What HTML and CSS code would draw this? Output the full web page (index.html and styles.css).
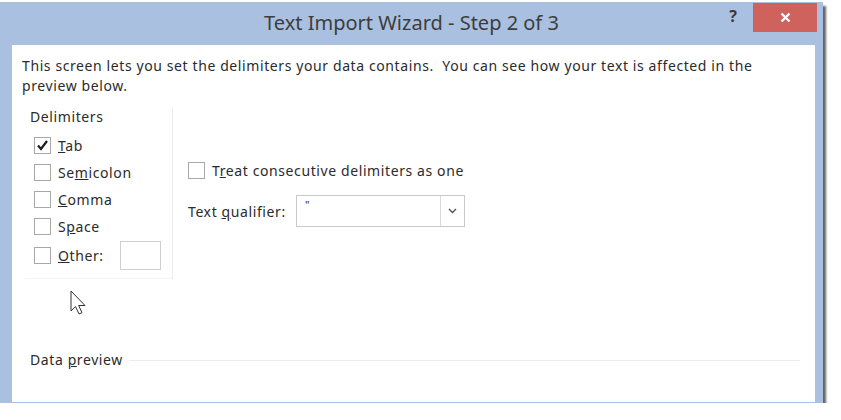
FILE: index.html
```html
<!DOCTYPE html>
<html lang="en">
<head>
  <meta charset="UTF-8" />
  <title>Text Import Wizard</title>
  <link rel="stylesheet" href="styles.css">
</head>
<body>
  <!-- =========  WINDOW  ========= -->
  <div class="window">
    <header class="titlebar">
      <span></span>
      <h1 class="title">Text Import Wizard - Step 2 of 3</h1>
      <div class="controls">
        <span class="help">?</span>
        <button class="close" aria-label="Close">
          <svg width="11" height="11" viewBox="0 0 11 11"><path d="M1.5 1.5 L9.5 9.5 M9.5 1.5 L1.5 9.5" stroke="#fff" stroke-width="2.4" fill="none"/></svg>
        </button>
      </div>
    </header>

    <main class="client">
      <p class="intro">This screen lets you set the delimiters your data contains.&nbsp; You can see how your text is affected in the<br>preview below.</p>

      <div class="options">
        <!-- ----------  DELIMITERS  ---------- -->
        <section class="delims">
          <div class="legend">Delimiters</div>
          <label class="row"><span class="check"><svg width="13" height="13" viewBox="0 0 13 13"><path d="M2 6.5 L5 10 L11 2" stroke="#1e1e1e" stroke-width="2.2" fill="none"/></svg></span><span><u>T</u>ab</span></label>
          <label class="row"><span class="check"></span><span>Se<u>m</u>icolon</span></label>
          <label class="row"><span class="check"></span><span><u>C</u>omma</span></label>
          <label class="row"><span class="check"></span><span>S<u>p</u>ace</span></label>
          <label class="row other"><span class="check"></span><span class="other-label"><u>O</u>ther:</span><span class="textbox"></span></label>
        </section>

        <!-- ----------  SETTINGS  ---------- -->
        <section class="settings">
          <label class="row"><span class="check"></span><span>T<u>r</u>eat consecutive delimiters as one</span></label>
          <div class="qualifier">
            <span class="q-label">Text <u>q</u>ualifier:</span>
            <div class="select">
              <span class="value">"</span>
              <span class="drop"><svg width="9" height="6" viewBox="0 0 9 6"><path d="M1 1 L4.5 4.5 L8 1" stroke="#555" stroke-width="1.4" fill="none"/></svg></span>
            </div>
          </div>
        </section>
      </div>

      <div class="preview-head">
        <span>Data <u>p</u>review</span>
        <span class="rule"></span>
      </div>

      <!-- mouse pointer -->
      <svg class="pointer" width="18" height="27" viewBox="0 0 18 27"><path d="M1 1 L1 21 L5.5 16.5 L9 24 L12 22.7 L8.6 15.5 L15 15.5 Z" fill="#fff" stroke="#333" stroke-width="1"/></svg>
    </main>
  </div>
</body>
</html>
```

FILE: styles.css
```css
/* --- tokens --- */
:root {
  --frame: #a9c0e1;
  --close: #d0625e;
  --text:  #2b2b2b;
  --line:  #ececec;
  --box:   #a8a8a8;
}

* { box-sizing: border-box; }

body {
  margin: 0;
  background: #fff;
  font-family: "Noto Sans", "Open Sans", sans-serif;
  color: var(--text);
}

/* --- window frame --- */
.window {
  width: 823px;
  height: 401px;
  margin-top: 2px;
  background: var(--frame);
  display: flex;
  flex-direction: column;
  box-shadow: 3px 4px 2px rgba(50,50,50,.75);
}

.titlebar {
  height: 43px;
  display: grid;
  grid-template-columns: 1fr auto 1fr;
  align-items: start;
}
.title {
  margin: 0;
  font-size: 20px;
  font-weight: 400;
  line-height: 42px;
  color: #3d3d3d;
  white-space: nowrap;
}
.controls {
  justify-self: end;
  display: flex;
  align-items: flex-start;
  margin: 1px 6px 0 0;
}
.help {
  font-size: 16px;
  font-weight: 700;
  line-height: 27px;
  color: #3a3a3a;
  margin-right: 16px;
}
.close {
  width: 64px;
  height: 29px;
  background: var(--close);
  border: none;
  padding: 0;
  display: flex;
  align-items: center;
  justify-content: center;
}

/* --- client area --- */
.client {
  flex: 1;
  margin: 0 8px 1px 12px;
  background: #fff;
  padding: 11px 0 0 10px;
  position: relative;
  font-size: 14px;
  letter-spacing: .6px;
}
.intro { margin: 0; line-height: 20px; }

.options {
  display: flex;
  margin-top: 11px;
}

.delims {
  width: 148px;
  margin-left: 3px;
  padding-bottom: 8px;
  border-right: 1px solid var(--line);
  border-bottom: 1px solid #f4f4f4;
}
.legend { line-height: 20px; padding-left: 5px; margin-bottom: 5px; }

.row {
  display: flex;
  align-items: center;
  gap: 7px;
  height: 27px;
  padding-left: 9px;
  white-space: nowrap;
}
.row.other { height: 30px; }
.other-label { width: 55px; }

.check {
  width: 17px;
  height: 17px;
  border: 1px solid var(--box);
  background: #fff;
  display: flex;
  align-items: center;
  justify-content: center;
  flex: none;
}
.textbox {
  width: 41px;
  height: 29px;
  border: 1px solid #cfcfcf;
}

.settings { padding: 50px 0 0 6px; }
.qualifier {
  display: flex;
  align-items: center;
  height: 32px;
  margin-top: 11px;
  padding-left: 9px;
}
.q-label { width: 108px; }
.select {
  width: 169px;
  height: 32px;
  border: 1px solid #c9c9c9;
  display: flex;
}
.select .value { flex: 1; padding: 3px 0 0 8px; font-size: 11px; line-height: 12px; }
.drop {
  width: 24px;
  border-left: 1px solid #dadada;
  display: flex;
  align-items: center;
  justify-content: center;
}

.preview-head {
  display: flex;
  align-items: center;
  gap: 6px;
  margin: 71px 15px 0 8px;
  line-height: 20px;
}
.rule { flex: 1; height: 1px; background: var(--line); }

.pointer { position: absolute; left: 58px; top: 245px; }
```
